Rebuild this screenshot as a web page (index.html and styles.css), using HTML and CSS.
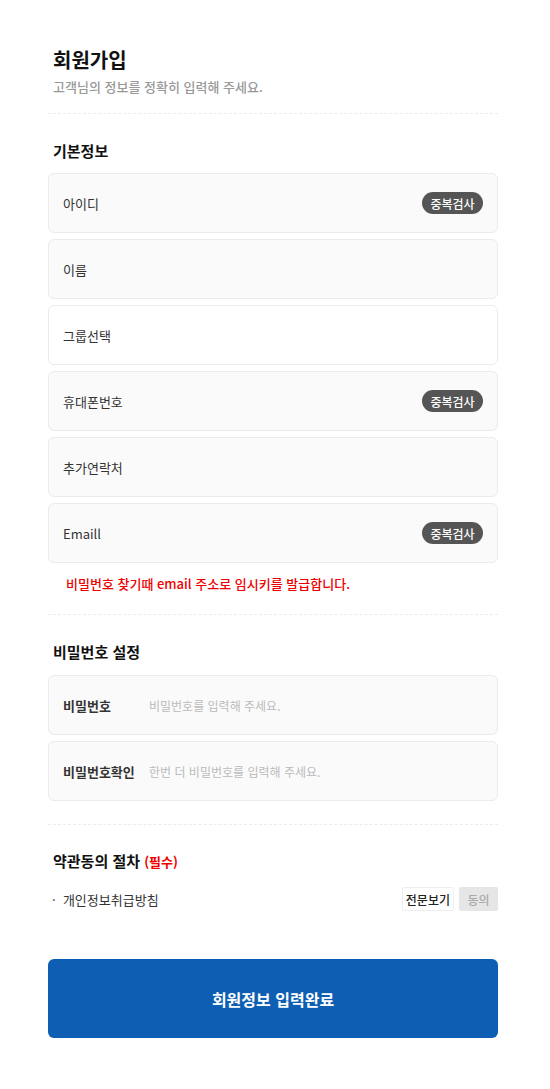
FILE: index.html
```html
<!DOCTYPE html>
<html lang="ko">
<head>
  <meta charset="UTF-8" />
  <meta name="viewport" content="width=device-width, initial-scale=1.0"/>
  <title>회원가입</title>
  <link rel="stylesheet" href="styles.css">
</head>
<body>
  <div class="wrap">
    <h1>회원가입</h1>
    <p class="sub">고객님의 정보를 정확히 입력해 주세요.</p>
    <hr class="line">

    <!-- 기본정보 -->
    <h2>기본정보</h2>
    <div class="fields">
      <div class="field"><span>아이디</span><button class="chk">중복검사</button></div>
      <div class="field"><span>이름</span></div>
      <div class="field white"><span>그룹선택</span></div>
      <div class="field"><span>휴대폰번호</span><button class="chk">중복검사</button></div>
      <div class="field"><span>추가연락처</span></div>
      <div class="field"><span>Emaill</span><button class="chk">중복검사</button></div>
    </div>
    <p class="note">비밀번호 찾기때 email 주소로 임시키를 발급합니다.</p>
    <hr class="line line-note">

    <!-- 비밀번호 -->
    <h2 class="pw-title">비밀번호 설정</h2>
    <div class="fields">
      <div class="field"><span class="lbl">비밀번호</span><span class="ph">비밀번호를 입력해 주세요.</span></div>
      <div class="field"><span class="lbl">비밀번호확인</span><span class="ph">한번 더 비밀번호를 입력해 주세요.</span></div>
    </div>
    <hr class="line line2">

    <!-- 약관 -->
    <h2 class="terms-title">약관동의 절차 <em>(필수)</em></h2>
    <div class="terms">
      <span class="terms-name">· &nbsp;개인정보취급방침</span>
      <div class="terms-btns">
        <button class="tbtn">전문보기</button>
        <button class="tbtn off">동의</button>
      </div>
    </div>

    <button class="submit">회원정보 입력완료</button>
  </div>
</body>
</html>
```

FILE: styles.css
```css
* {
  margin: 0;
  padding: 0;
  box-sizing: border-box;
}

body {
  font-family: "Noto Sans CJK KR", "Noto Sans", sans-serif;
  background: #fff;
  color: #222;
}

.wrap {
  width: 450px;
  margin-left: 48px;
  padding: 46px 0 50px;
}

h1 {
  font-size: 20px;
  font-weight: 700;
  line-height: 28px;
  color: #111;
  padding-left: 5px;
}

.sub {
  margin-top: 3px;
  font-size: 13px;
  line-height: 20px;
  color: #999;
  font-weight: 500;
  padding-left: 5px;
}

.line {
  border: none;
  border-top: 1px dashed #ececec;
  margin-top: 16px;
}

h2 {
  margin-top: 26px;
  margin-bottom: 11px;
  font-size: 15px;
  font-weight: 700;
  line-height: 22px;
  color: #111;
  padding-left: 5px;
}

.pw-title {
  margin-bottom: 12px;
}

.fields {
  display: flex;
  flex-direction: column;
  gap: 6px;
}

.field {
  height: 60px;
  display: flex;
  align-items: center;
  justify-content: space-between;
  padding: 0 14px;
  background: #fafafa;
  border: 1px solid #ebebeb;
  border-radius: 6px;
  font-size: 13px;
  color: #333;
}

.field.white {
  background: #fff;
}

.chk {
  width: 61px;
  height: 22px;
  border: none;
  border-radius: 11px;
  background: #555;
  color: #fff;
  font-family: inherit;
  font-size: 12px;
  font-weight: 500;
}

.lbl {
  width: 86px;
  flex-shrink: 0;
  font-weight: 700;
}

.ph {
  flex: 1;
  font-size: 12px;
  color: #bbb;
}

.note {
  margin-top: 11px;
  padding-left: 18px;
  font-size: 13px;
  line-height: 20px;
  color: #e00;
  font-weight: 500;
}

.line-note {
  margin-top: 20px;
}

.line2 {
  margin-top: 23px;
}

.terms-title {
  margin-top: 25px;
  margin-bottom: 0;
}

.terms-title em {
  font-style: normal;
  font-size: 13px;
  color: #e00;
}

.terms {
  margin-top: 14px;
  display: flex;
  align-items: center;
  justify-content: space-between;
  padding-left: 4px;
}

.terms-name {
  font-size: 13px;
  color: #333;
}

.terms-btns {
  display: flex;
  gap: 5px;
}

.tbtn {
  height: 24px;
  padding: 0 3px;
  border: 1px solid #eee;
  background: #fff;
  font-family: inherit;
  font-size: 12px;
  font-weight: 500;
  color: #222;
  border-radius: 2px;
}

.tbtn.off {
  width: 39px;
  background: #e6e6e6;
  border-color: #e6e6e6;
  color: #aaa;
}

.submit {
  margin-top: 48px;
  width: 100%;
  height: 79px;
  border: none;
  border-radius: 6px;
  background: #0e5fb3;
  color: #fff;
  font-family: inherit;
  font-size: 16px;
  font-weight: 700;
}
```
